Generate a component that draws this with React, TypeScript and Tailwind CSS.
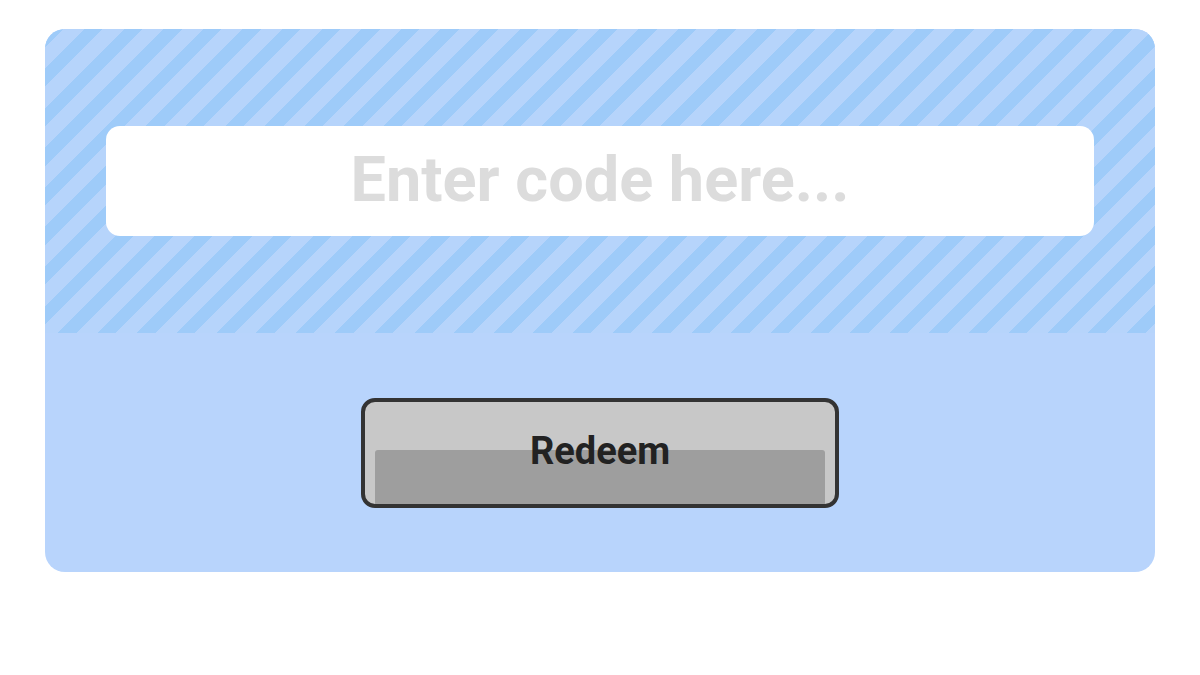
import { useState } from "react";

export default function App() {
  const [code, setCode] = useState("");

  return (
    <div className="min-h-screen bg-white px-[45px] pt-[29px] font-['Roboto',sans-serif]">
      <div className="overflow-hidden rounded-[20px] bg-[#b8d4fc]">
        {/* striped header with code input */}
        <div className="h-[304px] bg-[repeating-linear-gradient(135deg,#9ecbf9_0px,#9ecbf9_13px,#b6d4fb_13px,#b6d4fb_28px)] px-[61px] pt-[97px]">
          <input
            value={code}
            onChange={(e) => setCode(e.target.value)}
            placeholder="Enter code here..."
            className="h-[110px] w-full rounded-[14px] bg-white pb-[4px] text-center text-[63px] font-bold text-[#444] outline-none placeholder:text-[#dcdcdc]"
          />
        </div>

        {/* redeem button */}
        <div className="flex h-[239px] items-center justify-center">
          <button className="relative h-[110px] w-[478px] overflow-hidden rounded-[14px] border-4 border-[#333] bg-[#c8c8c8]">
            <div className="absolute bottom-0 left-[10px] right-[10px] h-[54px] rounded-t-[3px] bg-[#9e9e9e]" />
            <span className="relative -top-[1px] text-[38px] font-bold text-[#222]">Redeem</span>
          </button>
        </div>
      </div>
    </div>
  );
}
